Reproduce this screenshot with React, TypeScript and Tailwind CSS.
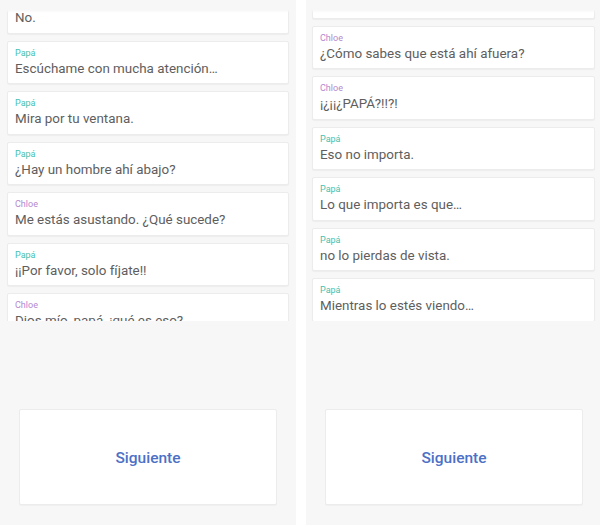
type Line = { who: 'Papá' | 'Chloe'; text: string };

const left: Line[] = [
    { who: 'Chloe', text: 'No.' },
    { who: 'Papá', text: 'Escúchame con mucha atención…' },
    { who: 'Papá', text: 'Mira por tu ventana.' },
    { who: 'Papá', text: '¿Hay un hombre ahí abajo?' },
    { who: 'Chloe', text: 'Me estás asustando. ¿Qué sucede?' },
    { who: 'Papá', text: '¡¡Por favor, solo fíjate!!' },
    { who: 'Chloe', text: 'Dios mío, papá, ¡qué es eso?' },
];

const right: Line[] = [
    { who: 'Chloe', text: 'Dios mío, papá, ¡qué es eso?' },
    { who: 'Chloe', text: '¿Cómo sabes que está ahí afuera?' },
    { who: 'Chloe', text: '¡¿¡¡¿PAPÁ?!!?!' },
    { who: 'Papá', text: 'Eso no importa.' },
    { who: 'Papá', text: 'Lo que importa es que…' },
    { who: 'Papá', text: 'no lo pierdas de vista.' },
    { who: 'Papá', text: 'Mientras lo estés viendo…' },
];

function Bubble({ line }: { line: Line }) {
    return (
        <div className="h-[43.5px] shrink-0 rounded-[2px] border border-[#ececec] bg-white px-[7px] pt-[6px] shadow-[0_1px_1px_rgba(0,0,0,0.04)]">
            <div
                className={`text-[9px] leading-[11px] ${line.who === 'Papá' ? 'text-[#46bfb2]' : 'text-[#b487cf]'}`}
            >
                {line.who}
            </div>
            <div className="text-[13.4px] leading-[19px] text-[#5e5e5e] whitespace-nowrap">{line.text}</div>
        </div>
    );
}

function Phone({ lines, offset, side }: { lines: Line[]; offset: string; side: 'left' | 'right' }) {
    return (
        <div className={`flex flex-col bg-[#f7f7f7] ${side === 'left' ? 'w-[296px]' : 'w-[294px]'}`}>
            {/* Chat */}
            <div className={`relative h-[321px] overflow-hidden ${side === 'left' ? 'px-[7px]' : 'pl-[6px] pr-[5px]'}`}>
                <div className={`flex flex-col gap-[7px] ${offset}`}>
                    {lines.map((l, i) => (
                        <Bubble key={i} line={l} />
                    ))}
                </div>
                <div className="absolute inset-x-0 top-0 h-[13px] bg-gradient-to-b from-[#f7f7f7] from-75% to-[#f7f7f7]/0" />
            </div>

            {/* Button */}
            <div className={`flex-1 pt-[88px] pb-[20px] ${side === 'left' ? 'px-[19px]' : 'pl-[19px] pr-[17px]'}`}>
                <button className="flex h-[96px] w-full items-center justify-center rounded-[2px] border border-[#ececec] bg-white pt-[4px] text-[15.5px] font-medium text-[#4d70c7] shadow-[0_1px_1px_rgba(0,0,0,0.03)]">
                    Siguiente
                </button>
            </div>
        </div>
    );
}

export default function App() {
    return (
        <div className="flex h-[525px] w-[600px] justify-between bg-white font-['Roboto',sans-serif]">
            <Phone lines={left} offset="-mt-[9.8px]" side="left" />
            <Phone lines={right} offset="-mt-[24.8px]" side="right" />
        </div>
    );
}
